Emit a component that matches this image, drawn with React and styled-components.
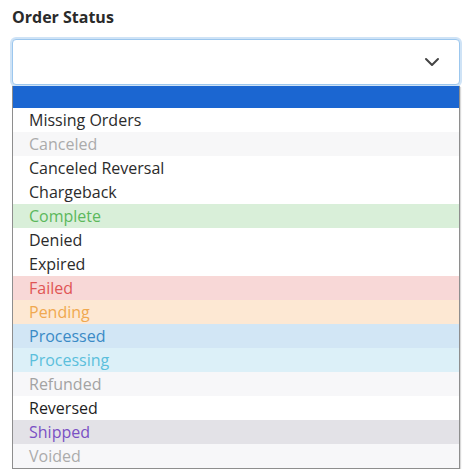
import styled, { createGlobalStyle } from "styled-components"

const GlobalStyle = createGlobalStyle`
    body {
        margin: 0;
        background: #ffffff;
        font-family: 'Open Sans', 'Liberation Sans', sans-serif;
    }
`

const statuses = [
    { label: 'Missing Orders', color: '#2b2b2b', bg: '#ffffff' },
    { label: 'Canceled', color: '#ababab', bg: '#f7f7f8' },
    { label: 'Canceled Reversal', color: '#2b2b2b', bg: '#ffffff' },
    { label: 'Chargeback', color: '#2b2b2b', bg: '#ffffff' },
    { label: 'Complete', color: '#5cb85c', bg: '#d9efd9' },
    { label: 'Denied', color: '#2b2b2b', bg: '#ffffff' },
    { label: 'Expired', color: '#2b2b2b', bg: '#ffffff' },
    { label: 'Failed', color: '#e05555', bg: '#f8d8d7' },
    { label: 'Pending', color: '#f0a850', bg: '#fde8d3' },
    { label: 'Processed', color: '#3a8ac6', bg: '#d2e6f5' },
    { label: 'Processing', color: '#5bbfdc', bg: '#dcf0f8' },
    { label: 'Refunded', color: '#a3a3a3', bg: '#f7f7f9' },
    { label: 'Reversed', color: '#1f1f1f', bg: '#ffffff' },
    { label: 'Shipped', color: '#7a50c4', bg: '#e3e2e7' },
    { label: 'Voided', color: '#ababab', bg: '#f7f7f9' },
]

export default function App(){
    return(
        <Wrapper>
            <GlobalStyle />
            <Label>Order Status</Label>
            <Select>
                <svg width="16" height="10" viewBox="0 0 16 10">
                    <path d="M2 2 L8 8 L14 2" fill="none" stroke="#444" strokeWidth="2" strokeLinecap="round" strokeLinejoin="round"/>
                </svg>
            </Select>
            <List>
                <Highlight />
                {statuses.map(s => (
                    <Option key={s.label} color={s.color} bg={s.bg}>{s.label}</Option>
                ))}
            </List>
        </Wrapper>
    )
}

const Wrapper = styled.div`
    width: 448px;
    padding: 6px 0 0 12px;
`
const Label = styled.div`
    font-size: 16px;
    font-weight: 700;
    color: #2a2a2a;
    height: 24px;
    line-height: 22px;
    margin-bottom: 9px;
`
const Select = styled.div`
    box-sizing: border-box;
    height: 46px;
    border: 1px solid #9cc7ee;
    border-radius: 4px;
    box-shadow: 0 0 0 2px #cfe3f6;
    display: flex;
    align-items: center;
    justify-content: flex-end;
    padding-right: 19px;
    background: #fff;
`
const List = styled.div`
    border: 1px solid #8e8e8e;
    border-top: none;
    box-shadow: 1px 1px 1px rgba(0,0,0,0.15);
    margin-top: 1px;
`
const Highlight = styled.div`
    height: 22px;
    background: #1b66d1;
`
const Option = styled.div`
    height: 24px;
    line-height: 24px;
    padding-left: 16px;
    font-size: 16px;
    color: ${props => props.color};
    background: ${props => props.bg};
`
